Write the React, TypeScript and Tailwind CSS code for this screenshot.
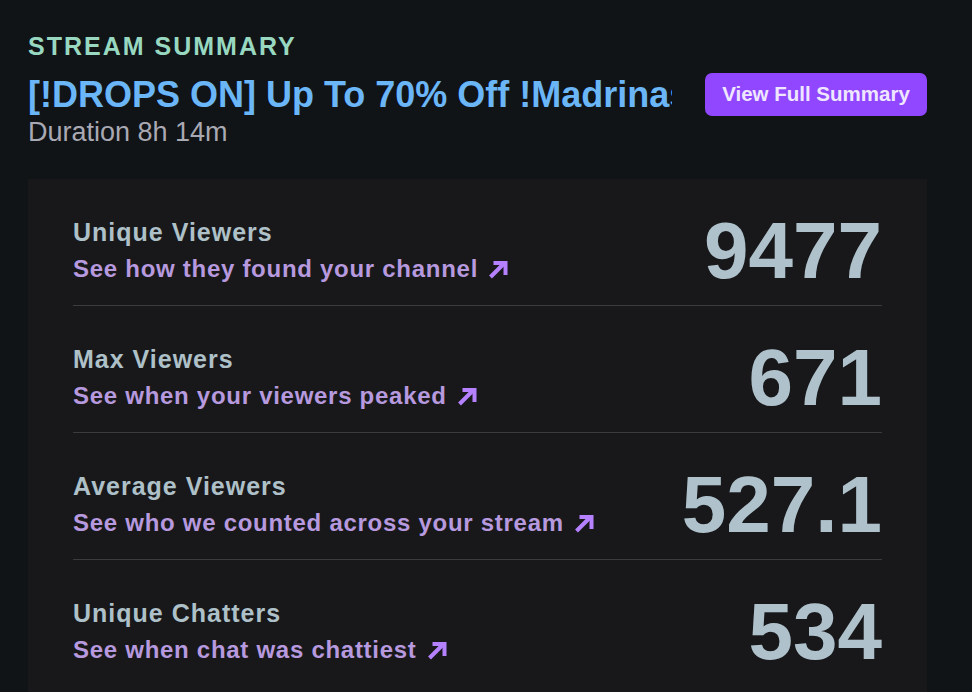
import React from "react";

const stats = [
  { label: "Unique Viewers", link: "See how they found your channel", value: "9477" },
  { label: "Max Viewers", link: "See when your viewers peaked", value: "671" },
  { label: "Average Viewers", link: "See who we counted across your stream", value: "527.1" },
  { label: "Unique Chatters", link: "See when chat was chattiest", value: "534" },
];

const ArrowIcon = () => (
  <svg width="20" height="20" viewBox="0 0 20 20" fill="none" className="shrink-0">
    <path d="M2.5 18 15.5 5" stroke="#b581ff" strokeWidth="4" />
    <path d="M5.5 4h12v12" stroke="#b581ff" strokeWidth="4" strokeLinejoin="miter" />
  </svg>
);

const App = () => {
  return (
    <div
      className="h-[692px] overflow-hidden bg-[#101417] pl-[28px] pr-[45px] pt-[31px]"
      style={{ fontFamily: '"Liberation Sans", Arial, sans-serif' }}
    >
      <div className="text-[25px] leading-[30px] font-bold tracking-[2px] text-[#98d8c0]">
        STREAM SUMMARY
      </div>
      <div className="mt-[12px] flex items-center">
        <div className="w-[644px] overflow-hidden whitespace-nowrap text-[36px] leading-[43px] font-bold text-[#6bb6f7]">
          [!DROPS ON] Up To 70% Off !Madrinas
        </div>
        <button className="ml-[33px] h-[43px] w-[222px] rounded-[7px] bg-[#9147ff] text-[20.5px] font-bold text-[#efe7ff]">
          View Full Summary
        </button>
      </div>
      <div className="text-[27px] leading-[32px] text-[#a9a9b3]">Duration 8h 14m</div>

      <div className="mt-[31px] h-[600px] bg-[#18181b] px-[45px]">
        {stats.map((s, i) => (
          <div
            key={s.label}
            className={`flex items-center justify-between pt-[32px] pb-[14px] ${
              i < stats.length - 1 ? "border-b border-[#3a3a3f]" : ""
            }`}
          >
            <div className="flex flex-col">
              <div className="text-[25px] leading-[30px] font-bold tracking-[0.04em] text-[#aec0c8]">
                {s.label}
              </div>
              <div className="mt-[6px] flex items-center gap-[10px] text-[24px] leading-[32px] font-bold tracking-[0.03em] text-[#b699de]">
                <span>{s.link}</span>
                <ArrowIcon />
              </div>
            </div>
            <div className="h-[80px] text-[80px] leading-[80px] font-bold text-[#afc2cb]">{s.value}</div>
          </div>
        ))}
      </div>
    </div>
  );
};

export default App;
